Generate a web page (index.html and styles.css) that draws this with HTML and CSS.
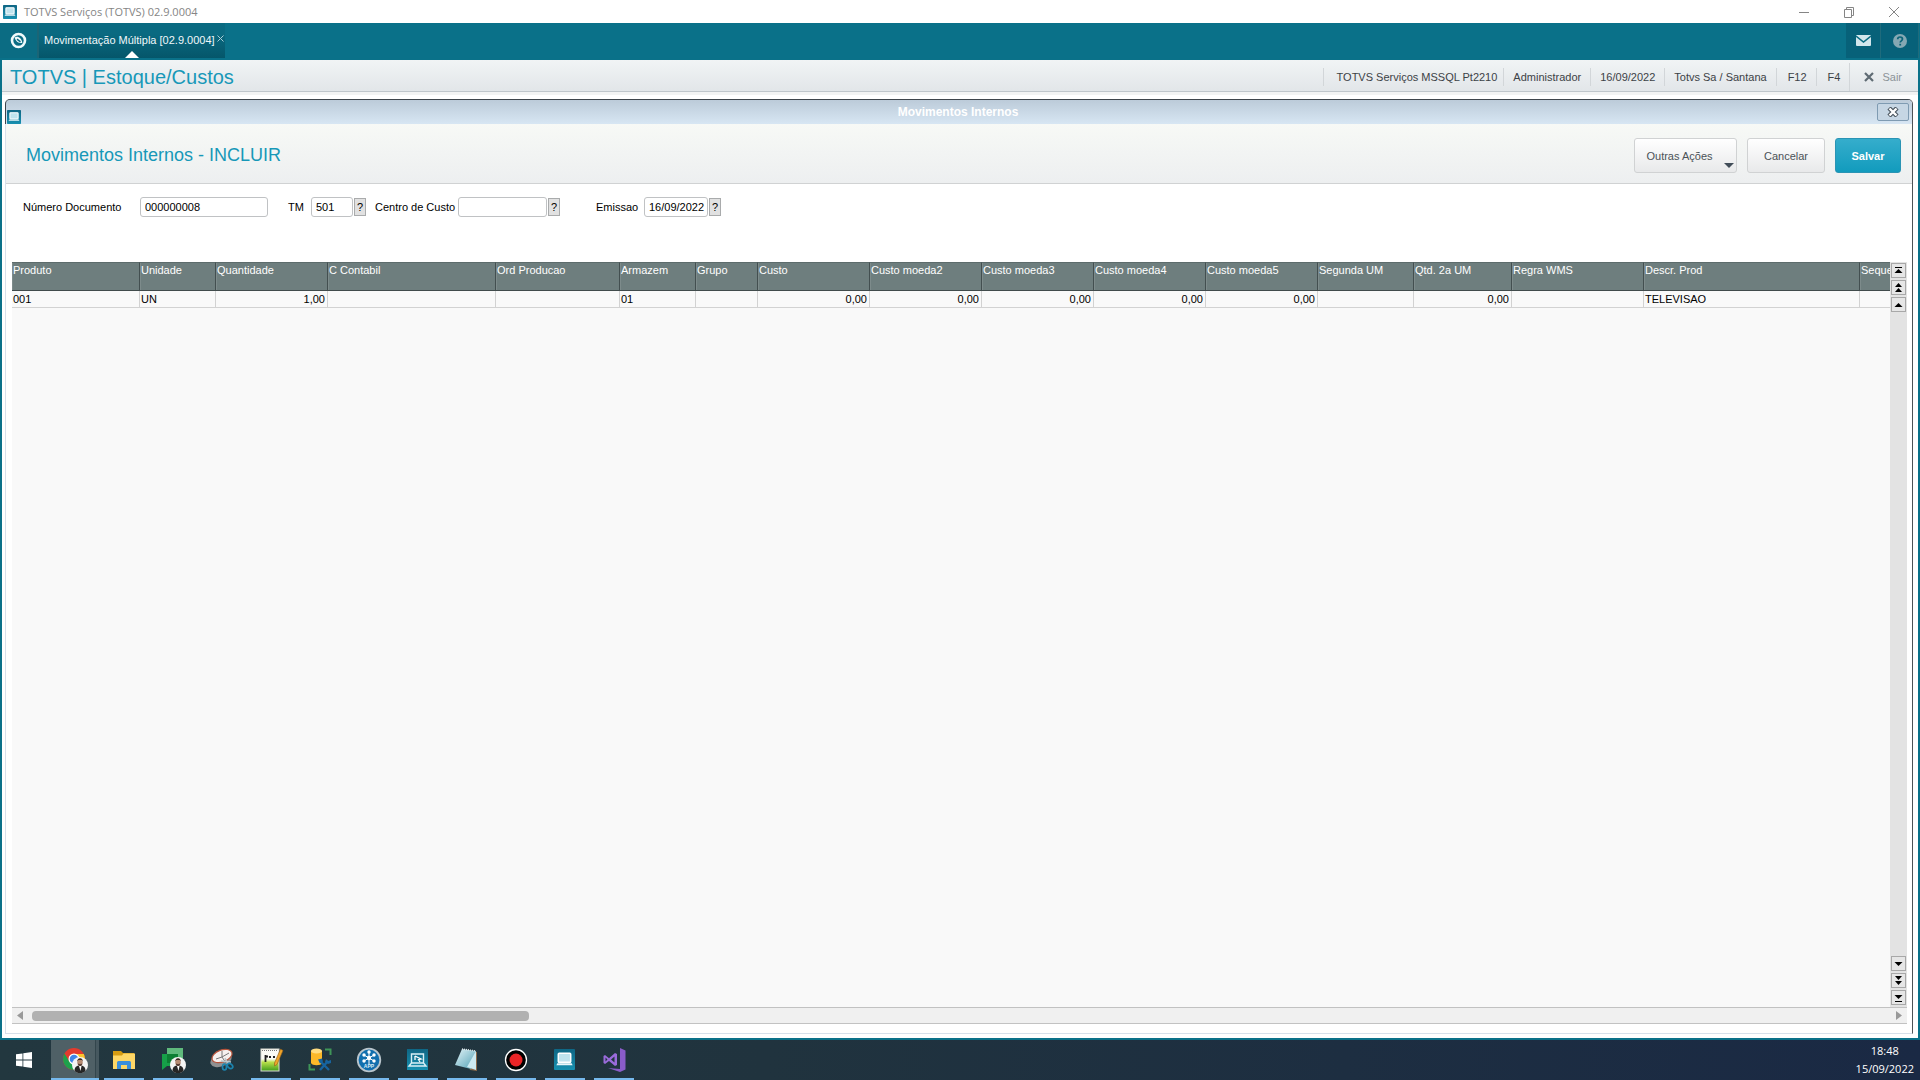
FILE: index.html
```html
<!DOCTYPE html>
<html lang="pt-BR">
<head>
<meta charset="utf-8">
<meta name="viewport" content="width=device-width, initial-scale=1">
<title>TOTVS Serviços (TOTVS) 02.9.0004</title>
<link rel="stylesheet" href="styles.css">
</head>
<body>
<svg class="defs" width="0" height="0" aria-hidden="true">
  <defs>
    <linearGradient id="g-app" x1="0" y1="0" x2="0" y2="1"><stop offset="0" stop-color="#0f6684"/><stop offset="1" stop-color="#1790b0"/></linearGradient>
    <linearGradient id="g-leaf" x1="0" y1="0" x2="1" y2="1"><stop offset="0" stop-color="#e3f4f8"/><stop offset="1" stop-color="#4f9fb4"/></linearGradient>
    <linearGradient id="g-green" x1="0" y1="0" x2="0" y2="1"><stop offset="0.45" stop-color="#fbfbf5"/><stop offset="0.6" stop-color="#b9e04a"/><stop offset="1" stop-color="#3f9c1b"/></linearGradient>
    <symbol id="app" viewBox="0 0 22 22">
      <rect width="22" height="22" rx="1" fill="url(#g-app)"/>
      <rect x="4.5" y="4.5" width="13" height="9.500" rx="1" fill="#bfe3ee" stroke="#fff" stroke-width="1.6"/>
      <path d="M2.500 17h17l-1-2.200h-15z" fill="#eaf6fa"/>
    </symbol>
    <symbol id="person" viewBox="0 0 16 16">
      <circle cx="8" cy="8" r="8" fill="#f4f4f4"/>
      <path d="M2.500 14c0-4 2-5.500 5.500-5.500s5.500 1.500 5.500 5.500a8 8 0 0 1-11 0z" fill="#262626"/>
      <path d="M7 9h2.500l-1 5z" fill="#fff"/>
      <ellipse cx="8" cy="5.200" rx="2.700" ry="3.600" fill="#b58a72"/>
      <path d="M5.200 4.500c0-4.500 5.700-4.500 5.700 0l-1-1.500h-3.500z" fill="#3b2a24"/>
      <path d="M5.800 6.500c.5 3.200 4 3.200 4.500 0l-2.200.8z" fill="#4b352c"/>
    </symbol>
  </defs>
</svg>

<header class="titlebar">
  <svg class="app-icon" aria-hidden="true"><use href="#app"/></svg>
  <span class="titlebar-text">TOTVS Serviços (TOTVS) 02.9.0004</span>
  <div class="window-controls">
    <button type="button" aria-label="Minimizar"><svg width="12" height="12" viewBox="0 0 12 12"><path d="M1 6.500h10"/></svg></button>
    <button type="button" aria-label="Restaurar"><svg width="12" height="12" viewBox="0 0 12 12"><path d="M1.500 3.500h7v8h-7zM3.500 3.500v-2h7v8h-2"/></svg></button>
    <button type="button" aria-label="Fechar"><svg width="12" height="12" viewBox="0 0 12 12"><path d="M1 1l10 10M11 1L1 11"/></svg></button>
  </div>
</header>

<nav class="tabbar">
  <button type="button" class="home" aria-label="Início">
    <svg width="17" height="17" viewBox="0 0 17 17"><circle cx="8.500" cy="8.500" r="6.500" fill="none" stroke="#f1fafb" stroke-width="2.600"/><path d="M4.500 5.500c3-2.300 7.500.6 7.800 5.500-3.600.6-6.600-1.500-7.800-5.500z" fill="#f1fafb"/><path d="M7 7.200l3.500 2.600" stroke="#0a6b82" stroke-width="1.500"/></svg>
  </button>
  <div class="tab">
    <span>Movimentação Múltipla [02.9.0004]</span>
    <button type="button" aria-label="Fechar aba"><svg width="7" height="7" viewBox="0 0 7 7"><path d="M.5.5l6 6M6.500.5l-6 6" stroke="#a9cdd6"/></svg></button>
  </div>
  <div class="tabbar-tools">
    <button type="button" aria-label="Mensagens"><svg width="15" height="11" viewBox="0 0 15 11"><rect width="15" height="11" rx="1" fill="#d3e6ec"/><path d="M0 1l7.500 6L15 1" fill="none" stroke="#0a6b82" stroke-width="1.600"/></svg></button>
    <button type="button" class="help" aria-label="Ajuda"><svg width="14" height="14" viewBox="0 0 14 14"><circle cx="7" cy="7" r="7" fill="#85a8b3"/><path d="M4.700 5.300c0-3 4.800-3 4.800-.2C9.500 7 7.200 6.800 7.200 8.600" fill="none" stroke="#0a6378" stroke-width="1.700"/><rect x="6.300" y="9.800" width="1.800" height="1.700" fill="#0a6378"/></svg></button>
  </div>
</nav>

<main class="workspace">
  <div class="module-bar">
    <h1>TOTVS | Estoque/Custos</h1>
    <ul class="session">
      <li>TOTVS Serviços MSSQL Pt2210</li>
      <li>Administrador</li>
      <li>16/09/2022</li>
      <li>Totvs Sa / Santana</li>
      <li>F12</li>
      <li>F4</li>
      <li class="exit"><a href="#sair"><svg width="10" height="10" viewBox="0 0 10 10"><path d="M1 1l8 8M9 1L1 9" stroke="#5f6b73" stroke-width="2.200"/></svg>Sair</a></li>
    </ul>
  </div>

  <section class="window">
    <div class="window-title">
      <svg class="app-icon" aria-hidden="true"><use href="#app"/></svg>
      <span>Movimentos Internos</span>
      <button type="button" class="window-close" aria-label="Fechar janela"><svg width="12" height="10" viewBox="0 0 12 10"><path d="M2 1l8 8M10 1L2 9" stroke="#47525c" stroke-width="4.500"/><path d="M2.500 1.500l7 7M9.500 1.500l-7 7" stroke="#fff" stroke-width="2.400"/></svg></button>
    </div>

    <div class="page-head">
      <h2>Movimentos Internos - INCLUIR</h2>
      <div class="actions">
        <button type="button" class="btn btn-menu">Outras Ações</button>
        <button type="button" class="btn">Cancelar</button>
        <button type="button" class="btn btn-primary">Salvar</button>
      </div>
    </div>

    <form class="fields">
      <div class="field"><label for="doc">Número Documento</label><input id="doc" class="in-doc" value="000000008"></div>
      <div class="field field-tm"><label for="tm">TM</label><input id="tm" class="in-tm" value="501"><button type="button" class="lookup">?</button></div>
      <div class="field field-cc"><label for="cc">Centro de Custo</label><input id="cc" class="in-cc" value=""><button type="button" class="lookup">?</button></div>
      <div class="field field-date"><label for="em">Emissao</label><input id="em" class="in-date" value="16/09/2022"><button type="button" class="lookup">?</button></div>
    </form>

    <div class="grid">
      <div class="grid-main">
        <div class="grid-view">
          <table>
            <colgroup><col class="w128"><col class="w76"><col class="w112"><col class="w168"><col class="w124"><col class="w76"><col class="w62"><col class="w112"><col class="w112"><col class="w112"><col class="w112"><col class="w112"><col class="w96"><col class="w98"><col class="w132"><col class="w216"><col></colgroup>
            <thead>
              <tr><th>Produto</th><th>Unidade</th><th>Quantidade</th><th>C Contabil</th><th>Ord Producao</th><th>Armazem</th><th>Grupo</th><th>Custo</th><th>Custo moeda2</th><th>Custo moeda3</th><th>Custo moeda4</th><th>Custo moeda5</th><th>Segunda UM</th><th>Qtd. 2a UM</th><th>Regra WMS</th><th>Descr. Prod</th><th>Sequencia</th></tr>
            </thead>
            <tbody>
              <tr><td>001</td><td>UN</td><td class="num">1,00</td><td></td><td></td><td>01</td><td></td><td class="num">0,00</td><td class="num">0,00</td><td class="num">0,00</td><td class="num">0,00</td><td class="num">0,00</td><td></td><td class="num">0,00</td><td></td><td>TELEVISAO</td><td></td></tr>
            </tbody>
          </table>
        </div>
        <div class="vscroll">
          <button type="button" aria-label="Primeira linha"><svg width="9" height="11" viewBox="0 0 9 11"><path d="M1 2.500h7" stroke="#000"/><path d="M4.500 4L8.500 8h-8z"/></svg></button>
          <button type="button" aria-label="Página anterior"><svg width="9" height="11" viewBox="0 0 9 11"><path d="M4.500 1L8 5H1zM4.500 6L8 10H1z"/></svg></button>
          <button type="button" aria-label="Linha anterior"><svg width="9" height="11" viewBox="0 0 9 11"><path d="M4.500 4L8.500 8h-8z"/></svg></button>
          <span class="track"></span>
          <button type="button" aria-label="Próxima linha"><svg width="9" height="11" viewBox="0 0 9 11"><path d="M4.500 8L8.500 4h-8z"/></svg></button>
          <button type="button" aria-label="Próxima página"><svg width="9" height="11" viewBox="0 0 9 11"><path d="M4.500 5L8 1H1zM4.500 10L8 6H1z"/></svg></button>
          <button type="button" aria-label="Última linha"><svg width="9" height="11" viewBox="0 0 9 11"><path d="M1 9.500h7" stroke="#000"/><path d="M4.500 7L8.500 3h-8z"/></svg></button>
        </div>
      </div>
      <div class="hscroll">
        <button type="button" aria-label="Rolar para a esquerda"><svg width="6" height="9" viewBox="0 0 6 9"><path d="M6 0v9L0 4.500z"/></svg></button>
        <div class="rail"><div class="thumb"></div></div>
        <button type="button" aria-label="Rolar para a direita"><svg width="6" height="9" viewBox="0 0 6 9"><path d="M0 0v9l6-4.500z"/></svg></button>
      </div>
    </div>
  </section>
</main>

<footer class="taskbar">
  <button type="button" class="start" aria-label="Iniciar"><svg width="16" height="16" viewBox="0 0 16 16"><path fill="#fff" d="M0 2.300l6.500-.9v6.100H0zM7.300 1.300L16 0v7.500H7.300zM0 8.400h6.500v6.200L0 13.700zM7.300 8.400H16V16l-8.700-1.200z"/></svg></button>
  <button type="button" class="task active" aria-label="Chrome"><svg width="26" height="26" viewBox="0 0 26 26">
    <circle cx="12" cy="12" r="11" fill="#e33b2e"/><path d="M2.500 6.500A11 11 0 0 0 12 23l5-8.500-5 2.500-5-3z" fill="#1da14c"/><path d="M12 7h9.800A11 11 0 0 1 12 23l5-8.500z" fill="#fbc52d"/><circle cx="12" cy="12" r="5.500" fill="#fff"/><circle cx="12" cy="12" r="4.300" fill="#3f86e8"/><use href="#person" x="10" y="10" width="16" height="16"/></svg></button>
  <button type="button" class="task open" aria-label="Explorador"><svg width="26" height="26" viewBox="0 0 26 26">
    <path d="M2 4h8l2 2h11v5H2z" fill="#d79c12"/><path d="M2 8.500h9l1.500-2H24V22H2z" fill="#ffd766"/><path d="M6 22v-6.500q0-1.500 1.500-1.500h11q1.500 0 1.500 1.500V22h-4v-4h-6v4z" fill="#3c8fdc"/></svg></button>
  <button type="button" class="task open" aria-label="Chat"><svg width="26" height="26" viewBox="0 0 26 26">
    <path d="M7 1h16v15H7z" fill="#5fba7c"/><path d="M2 7h16v12H7l-5 4z" fill="#16a048"/><path d="M7 7h11v9H7z" fill="#0c7f33"/><use href="#person" x="10" y="10" width="16" height="16"/></svg></button>
  <button type="button" class="task" aria-label="Captura"><svg width="26" height="26" viewBox="0 0 26 26">
    <ellipse cx="12" cy="13" rx="11" ry="6.500" transform="rotate(-20 12 13)" fill="#8f9192"/><ellipse cx="13" cy="9" rx="10.500" ry="6" transform="rotate(-20 13 9)" fill="#f6f1ef" stroke="#b5533a" stroke-width="1.200"/><path d="M13 4v6l4 6M7 12l6-2 7-4" fill="none" stroke="#777" stroke-width="1"/><path d="M12 14l10 1M16 11l3 6" stroke="#b9c6cc" stroke-width="1.500"/><ellipse cx="15.500" cy="20" rx="2" ry="3" fill="none" stroke="#1b83ae" stroke-width="1.700"/><ellipse cx="21" cy="19" rx="3" ry="2.200" transform="rotate(40 21 19)" fill="none" stroke="#1b83ae" stroke-width="1.700"/></svg></button>
  <button type="button" class="task open" aria-label="Notepad++"><svg width="26" height="26" viewBox="0 0 26 26">
    <rect x="3" y="2" width="18" height="22" fill="url(#g-green)" stroke="#d9d9d2"/><path d="M4 3.500h16" stroke="#777" stroke-dasharray="1 1"/><path d="M7.500 8v7M8 9.500h2M11 10h2M15 10h2" stroke="#222" stroke-width="1.800"/><path d="M22.500 2l2.500 1.500-6 14-2.500 1.500v-3z" fill="#efa42a" stroke="#8e5c1a" stroke-width=".6"/></svg></button>
  <button type="button" class="task open" aria-label="Banco de dados"><svg width="26" height="26" viewBox="0 0 26 26">
    <path d="M4 4v12c1 3 10 3 11 0V4z" fill="#fbb829"/><ellipse cx="9.500" cy="4" rx="5.500" ry="2.500" fill="#ffdc80"/><path d="M18 2.500h5.500V8M2.500 17v5.500H8" fill="none" stroke="#3f9558" stroke-width="2"/><path d="M13 23l8-9M13 14l9 9" stroke="#17649f" stroke-width="2.400"/><path d="M11 12.500l4-1 1 3-3 2zM19 12l2 2 3-1v3l-3 1-3-2z" fill="#17649f"/></svg></button>
  <button type="button" class="task open" aria-label="App Server"><svg width="26" height="26" viewBox="0 0 26 26">
    <circle cx="13" cy="13" r="11.300" fill="#126fae" stroke="#b9c5cc" stroke-width="1.800"/><path d="M13 5v12M8 8l10 6M18 8L8 14" stroke="#fff" stroke-width="1"/><g fill="#fff"><circle cx="13" cy="11" r="2.200"/><circle cx="13" cy="5" r="1.700"/><circle cx="8" cy="8" r="1.700"/><circle cx="18" cy="8" r="1.700"/><circle cx="8" cy="14" r="1.700"/><circle cx="18" cy="14" r="1.700"/></g><text x="13" y="21" class="badge-text">APP</text></svg></button>
  <button type="button" class="task open" aria-label="Smart Client"><svg width="26" height="26" viewBox="0 0 26 26">
    <rect x="2" y="2" width="21" height="21" fill="url(#g-app)"/><path d="M6.500 7h12v9h-12zM6.500 16L4 19h17l-2.500-3" fill="none" stroke="#d8eff6" stroke-width="1.400"/><path d="M10 9l6 3-2.500.5L15 15M10 9v4" fill="none" stroke="#fff" stroke-width="1.300"/></svg></button>
  <button type="button" class="task open" aria-label="Bloco de notas"><svg width="26" height="26" viewBox="0 0 26 26">
    <path d="M9 3l14 2v19l-7-1z" fill="#8b6a4a"/><path d="M8 2l14 2-5 18L1 18z" fill="url(#g-leaf)"/><path d="M22 4v19l-9-3z" fill="#cdeaf1"/><path d="M8 2l14 2" stroke="#dfe8ea" stroke-width="1.500" stroke-dasharray="1 1"/></svg></button>
  <button type="button" class="task open" aria-label="Gravador"><svg width="26" height="26" viewBox="0 0 26 26"><circle cx="13" cy="13" r="10.500" fill="#000" stroke="#fff" stroke-width="1.300"/><circle cx="13" cy="13" r="6.500" fill="#ea2426"/></svg></button>
  <button type="button" class="task open" aria-label="TOTVS"><svg width="26" height="26" viewBox="0 0 26 26"><use href="#app" x="2" y="2" width="21" height="21"/></svg></button>
  <button type="button" class="task open" aria-label="Visual Studio"><svg width="26" height="26" viewBox="0 0 26 26">
    <path d="M19 1l5.500 2.500v19L19 25 7 21l12 1z" fill="#8a5cc9"/><path d="M14 6l2 1v11l-2 1-6-5-4 3-1.500-1V9L4 8l4 3.200zM4.500 10.500v4l2-2zM13.500 9.500l-3.500 3 3.500 3z" fill="#9a6bdb" fill-rule="evenodd"/></svg></button>
  <div class="clock"><time>18:48</time><time>15/09/2022</time></div>
</footer>
</body>
</html>
```
FILE: styles.css
```css
* { box-sizing: border-box; }

body {
  margin: 0;
  min-height: 100vh;
  display: flex;
  flex-direction: column;
  background: #fff;
  color: #000;
  font: 11px/14px "Liberation Sans", Arial, sans-serif;
}

h1, h2, ul { margin: 0; padding: 0; font-weight: 400; }

button {
  display: flex;
  align-items: center;
  justify-content: center;
  padding: 0;
  border: 0;
  background: none;
  font: inherit;
  color: inherit;
}

.defs { position: absolute; }
.app-icon { width: 14px; height: 14px; flex: none; }

/* Desktop window frame */
.titlebar {
  display: flex;
  align-items: center;
  height: 23px;
  padding: 0 3px;
  gap: 7px;
  color: #858585;
  font: 11px/16px "Open Sans", "Noto Sans", sans-serif;
}
.window-controls { display: flex; margin-left: auto; }
.window-controls button { width: 46px; height: 22px; }
.window-controls button:nth-child(2) { width: 44px; }
.window-controls svg { fill: none; stroke: #858585; }

.tabbar {
  display: flex;
  align-items: stretch;
  height: 37px;
  padding: 0 1px 2px 0;
  background: #0a7189;
}
.home { width: 39px; border-right: 2px solid #1b6576; background: #0b6c83; }
.tab {
  position: relative;
  display: flex;
  align-items: center;
  gap: 2px;
  padding: 0 1px 2px 5px;
  background: linear-gradient(#0a6a81 0 30%, #05566a);
  color: #f0f8fa;
}
.tab button { height: 9px; margin-bottom: 2px; }
.tab::after {
  content: "";
  position: absolute;
  left: 50%;
  bottom: 0;
  border: 7px solid transparent;
  border-top: 0;
  border-bottom-color: #fff;
  transform: translateX(-7px);
}
.tabbar-tools { display: flex; margin-left: auto; }
.tabbar-tools button { width: 35px; background: #076179; border-right: 1px solid #1f6b7c; }
.tabbar-tools .help { width: 38px; }

.workspace {
  flex: 1;
  display: flex;
  flex-direction: column;
  border: solid #0a7189;
  border-width: 0 2px 2px;
}

.module-bar {
  display: flex;
  align-items: center;
  height: 32px;
  padding: 2px 1px 0 8px;
  border-bottom: 1px solid #bfc6cb;
  background: linear-gradient(#f1f4f5, #e2e6e9);
  box-shadow: 0 3px #f2f3f3;
}
.module-bar h1 { font-size: 20px; line-height: 28px; color: #1798b8; }
.session { display: flex; align-items: center; margin-left: auto; list-style: none; color: #3c4246; }
.session li { padding: 2px 9px; border-left: 1px solid #d2d6d9; }
.session li:first-child { padding: 2px 6px 2px 13px; }
.session li:nth-child(5), .session li:nth-child(6) { padding-left: 11px; }
.session .exit { padding: 7px 15px 7px 14px; }
.exit a { display: flex; align-items: center; gap: 8px; color: #8b9398; text-decoration: none; }

/* Inner dialog */
.window {
  flex: 1;
  display: flex;
  flex-direction: column;
  margin: 7px 5px 4px 3px;
  border: 1px solid #d7e0ea;
  border-top-color: #3d444b;
  border-right-color: #4d5256;
  border-radius: 5px 5px 0 0;
}
.window-title {
  display: grid;
  grid-template-columns: 1fr auto 1fr;
  align-items: center;
  height: 24px;
  margin-left: -1px;
  padding: 0 3px 0 1px;
  border-left: 1px solid #3d444b;
  border-radius: 4px 4px 0 0;
  background: linear-gradient(#bccbd9, #d7e6f3);
  color: #fff;
  font-size: 12px;
  font-weight: 700;
}
.window-title .app-icon { align-self: end; }
.window-close {
  justify-self: end;
  width: 32px;
  height: 18px;
  border: 1px solid #7f9bb2;
  border-radius: 2px;
  background: #c6d6e4;
}

.page-head {
  display: flex;
  align-items: center;
  justify-content: space-between;
  height: 60px;
  padding: 3px 11px 0 20px;
  border-bottom: 1px solid #d0d2d3;
  background: linear-gradient(#f7f9f6, #edeff0);
}
.page-head h2 { font-size: 18px; line-height: 24px; color: #1798b8; }
.actions { display: flex; gap: 10px; }
.btn {
  position: relative;
  width: 78px;
  height: 35px;
  padding-top: 2px;
  border: 1px solid #d0d2d3;
  border-radius: 3px;
  background: linear-gradient(#fff, #e8e9ea);
  color: #4b5257;
}
.btn-menu { width: 103px; padding-right: 12px; }
.btn-menu::after {
  content: "";
  position: absolute;
  right: 2px;
  bottom: 4px;
  border: 5px solid transparent;
  border-top-color: #414d58;
  border-bottom: 0;
}
.btn-primary {
  width: 66px;
  border-color: #2a94b4;
  background: linear-gradient(#35adcc, #129bbd);
  color: #fff;
  font-weight: 700;
}

.fields {
  display: flex;
  align-items: center;
  padding: 13px 17px 45px;
}
.field { display: flex; align-items: center; }
.field input {
  height: 20px;
  padding: 0 0 0 4px;
  border: 1px solid #c0c2c4;
  border-radius: 3px;
  background: #fff;
  font: inherit;
  color: #000;
}
.field label { white-space: nowrap; }
.field .in-doc { width: 128px; }
.field .in-tm { width: 42px; }
.field .in-cc { width: 89px; }
.field .in-date { width: 64px; }
.field:first-child label { width: 117px; }
.field-tm { margin-left: 20px; }
.field-tm label { width: 23px; }
.field-cc { margin-left: 9px; }
.field-cc label { width: 83px; }
.field-date { margin-left: 36px; }
.field-date label { width: 48px; }
.lookup {
  width: 12px;
  height: 18px;
  margin-left: 1px;
  border: 1px solid #a9abac;
  background: #e1e1e1;
}

/* Item grid */
.grid {
  flex: 1;
  display: flex;
  flex-direction: column;
  margin: 0 5px 9px 6px;
}
.grid-main { flex: 1; display: flex; }
.grid-view { flex: 1; min-width: 0; overflow: hidden; background: #f9f9f9; }
table { width: 100%; table-layout: fixed; border-collapse: separate; border-spacing: 0; }
.w62 { width: 62px; }
.w76 { width: 76px; }
.w96 { width: 96px; }
.w98 { width: 98px; }
.w112 { width: 112px; }
.w124 { width: 124px; }
.w128 { width: 128px; }
.w132 { width: 132px; }
.w168 { width: 168px; }
.w216 { width: 216px; }
th {
  height: 29px;
  padding: 0 0 0 1px;
  overflow: hidden;
  border-top: 1px solid #5d6c6c;
  border-right: 1px solid #434f50;
  border-bottom: 1px solid #414b4c;
  background: #6e7e7e;
  box-shadow: inset 1px 0 #7d8b8b;
  color: #fff;
  font-weight: 400;
  text-align: left;
  vertical-align: top;
  white-space: nowrap;
}
td {
  height: 17px;
  padding: 0 2px 1px 1px;
  border-right: 1px solid #d2d2d2;
  border-bottom: 1px solid #d2d2d2;
}
th:last-child, td:last-child { border-right: 0; }
.num { text-align: right; }

.vscroll {
  display: flex;
  flex-direction: column;
  gap: 2px;
  width: 17px;
  padding: 1px 1px 2px;
  background: #e3e3e3;
}
.vscroll button {
  width: 15px;
  height: 15px;
  border: 1px solid #a8a8a8;
  background: #e6e6e6;
}
.track { flex: 1; }

.hscroll {
  display: flex;
  align-items: center;
  height: 17px;
  border: solid #c2c2c2;
  border-width: 1px 0;
  background: #f0f0f0;
}
.hscroll button { width: 16px; height: 15px; }
.hscroll button svg { fill: #999; }
.rail { flex: 1; padding: 0 4px; }
.thumb { width: calc(27% - 4px); height: 10px; border-radius: 4px; background: #b1b1b1; }

/* Operating system bar */
.taskbar {
  display: flex;
  height: 40px;
  background: linear-gradient(90deg, #22373f, #20333e 40%, #1a2944);
}
.start { width: 51px; padding-right: 3px; }
.task { position: relative; width: 49px; }
.task.active {
  width: 48px;
  background: linear-gradient(90deg, #4f6066 0 44px, #33464d 44px 45px, #46585f 45px);
}
.open::after, .active::after {
  content: "";
  position: absolute;
  left: 5px;
  right: 4px;
  bottom: 0;
  height: 2px;
  background: #76b9ed;
}
.active::after { left: 0; right: 0; }
.badge-text { font-size: 5px; font-weight: 700; fill: #d9edf7; text-anchor: middle; }
.clock {
  display: flex;
  flex-direction: column;
  align-items: center;
  gap: 2px;
  margin-left: auto;
  padding: 3px 6px 0;
  color: #fff;
  font: 11px/16px "Open Sans", "Noto Sans", sans-serif;
}
```
